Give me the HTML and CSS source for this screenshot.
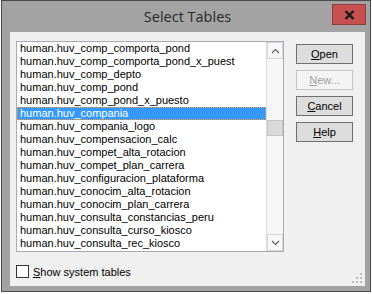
FILE: index.html
```html
<!doctype html>
<html lang="en">
<head>
<meta charset="utf-8">
<title>Select Tables</title>
<link rel="stylesheet" href="styles.css">
</head>
<body>
<div id="window">
  <div id="titleBar">
    <span></span>
    <span id="title">Select Tables</span>
    <div id="closeButton">
      <svg width="11" height="10" viewBox="0 0 11 10"><path d="M1.5 1 L9.5 9 M9.5 1 L1.5 9" stroke="#1a1a1a" stroke-width="2.4"/></svg>
    </div>
  </div>
  <div id="client">
    <div id="mainRow">
      <div id="tableList">
        <div id="items">
          <div class="item">human.huv_comp_comporta_pond</div>
          <div class="item">human.huv_comp_comporta_pond_x_puest</div>
          <div class="item">human.huv_comp_depto</div>
          <div class="item">human.huv_comp_pond</div>
          <div class="item">human.huv_comp_pond_x_puesto</div>
          <div class="item selected">human.huv_compania</div>
          <div class="item">human.huv_compania_logo</div>
          <div class="item">human.huv_compensacion_calc</div>
          <div class="item">human.huv_compet_alta_rotacion</div>
          <div class="item">human.huv_compet_plan_carrera</div>
          <div class="item">human.huv_configuracion_plataforma</div>
          <div class="item">human.huv_conocim_alta_rotacion</div>
          <div class="item">human.huv_conocim_plan_carrera</div>
          <div class="item">human.huv_consulta_constancias_peru</div>
          <div class="item">human.huv_consulta_curso_kiosco</div>
          <div class="item">human.huv_consulta_rec_kiosco</div>
        </div>
        <div id="scrollBar">
          <div class="arrow">
            <svg width="9" height="6" viewBox="0 0 9 6"><path d="M1 5 L4.5 1.5 L8 5" fill="none" stroke="#606060" stroke-width="1.2"/></svg>
          </div>
          <div id="track">
            <div id="thumb"></div>
          </div>
          <div class="arrow">
            <svg width="9" height="6" viewBox="0 0 9 6"><path d="M1 1 L4.5 4.5 L8 1" fill="none" stroke="#606060" stroke-width="1.2"/></svg>
          </div>
        </div>
      </div>
      <div id="buttons">
        <div class="button"><u>O</u>pen</div>
        <div class="button disabled"><u>N</u>ew...</div>
        <div class="button"><u>C</u>ancel</div>
        <div class="button"><u>H</u>elp</div>
      </div>
    </div>
    <div id="systemTables">
      <span class="checkbox"></span>
      <span><u>S</u>how system tables</span>
    </div>
    <svg id="grip" width="10" height="10" viewBox="0 0 10 10">
      <rect x="8" y="0" width="2" height="2" fill="#bcbcbc"/>
      <rect x="4" y="4" width="2" height="2" fill="#bcbcbc"/>
      <rect x="8" y="4" width="2" height="2" fill="#bcbcbc"/>
      <rect x="0" y="8" width="2" height="2" fill="#bcbcbc"/>
      <rect x="4" y="8" width="2" height="2" fill="#bcbcbc"/>
      <rect x="8" y="8" width="2" height="2" fill="#bcbcbc"/>
    </svg>
  </div>
</div>
</body>
</html>
```

FILE: styles.css
```css
html, body {
  margin: 0;
  padding: 0;
  background-color: white;
  font-family: 'Liberation Sans', Arial, sans-serif;
  font-size: 11px;
}

* {
  box-sizing: border-box;
}

#window {
  margin-left: 1px;
  width: 370px;
  height: 292px;
  border: 1px solid #4a4a4a;
  background-color: #a3a3a3;
  padding: 0 5px 5px 8px;
  display: flex;
  flex-direction: column;
}

#titleBar {
  height: 31px;
  display: grid;
  grid-template-columns: 1fr auto 1fr;
  align-items: start;
}

#title {
  font-family: 'Open Sans', 'Noto Sans', sans-serif;
  font-size: 14.5px;
  color: #2a2a2a;
  padding-top: 6px;
}

#closeButton {
  justify-self: end;
  margin-top: 3px;
  margin-right: -1px;
  width: 34px;
  height: 21px;
  background-color: #c75050;
  border: 1px solid #8e3c3c;
  display: flex;
  justify-content: center;
  align-items: center;
}

#client {
  flex: 1;
  background-color: #f0f0f0;
  padding: 9px 0 0 6px;
  position: relative;
}

#mainRow {
  display: flex;
  align-items: flex-start;
}

#tableList {
  width: 268px;
  height: 211px;
  border: 1px solid #a9abb0;
  background-color: white;
  display: flex;
}

#items {
  flex: 1;
  overflow: hidden;
}

.item {
  height: 13px;
  line-height: 13px;
  padding-left: 3px;
  white-space: nowrap;
  color: #000;
}

.item.selected {
  background-color: #3399ff;
  color: white;
  outline: 1px dotted #ff9a30;
  outline-offset: -1px;
}

#scrollBar {
  width: 17px;
  display: flex;
  flex-direction: column;
  background-color: #f7f7f7;
  border-left: 1px solid #dcdcdc;
}

.arrow {
  height: 17px;
  border: 1px solid #d6d6d6;
  background-color: #f8f8f8;
  display: flex;
  justify-content: center;
  align-items: center;
}

#track {
  flex: 1;
  padding-top: 61px;
}

#thumb {
  height: 16px;
  background-color: #dadada;
  border: 1px solid #c6c6c6;
}

#buttons {
  margin-left: 12px;
  margin-top: 3px;
  display: flex;
  flex-direction: column;
  gap: 6px;
}

.button {
  width: 57px;
  height: 20px;
  border: 1px solid #707070;
  background-color: #dddddd;
  color: #000;
  display: flex;
  justify-content: center;
  align-items: center;
}

.button.disabled {
  border-color: #c4c4c4;
  background-color: #f4f4f4;
  color: #a0a0a0;
}

#systemTables {
  margin-top: 13px;
  display: flex;
  align-items: center;
  gap: 4px;
  color: #000;
}

.checkbox {
  width: 13px;
  height: 13px;
  border: 1px solid #333333;
  background-color: white;
}

#grip {
  position: absolute;
  right: 3px;
  bottom: 3px;
}
```
